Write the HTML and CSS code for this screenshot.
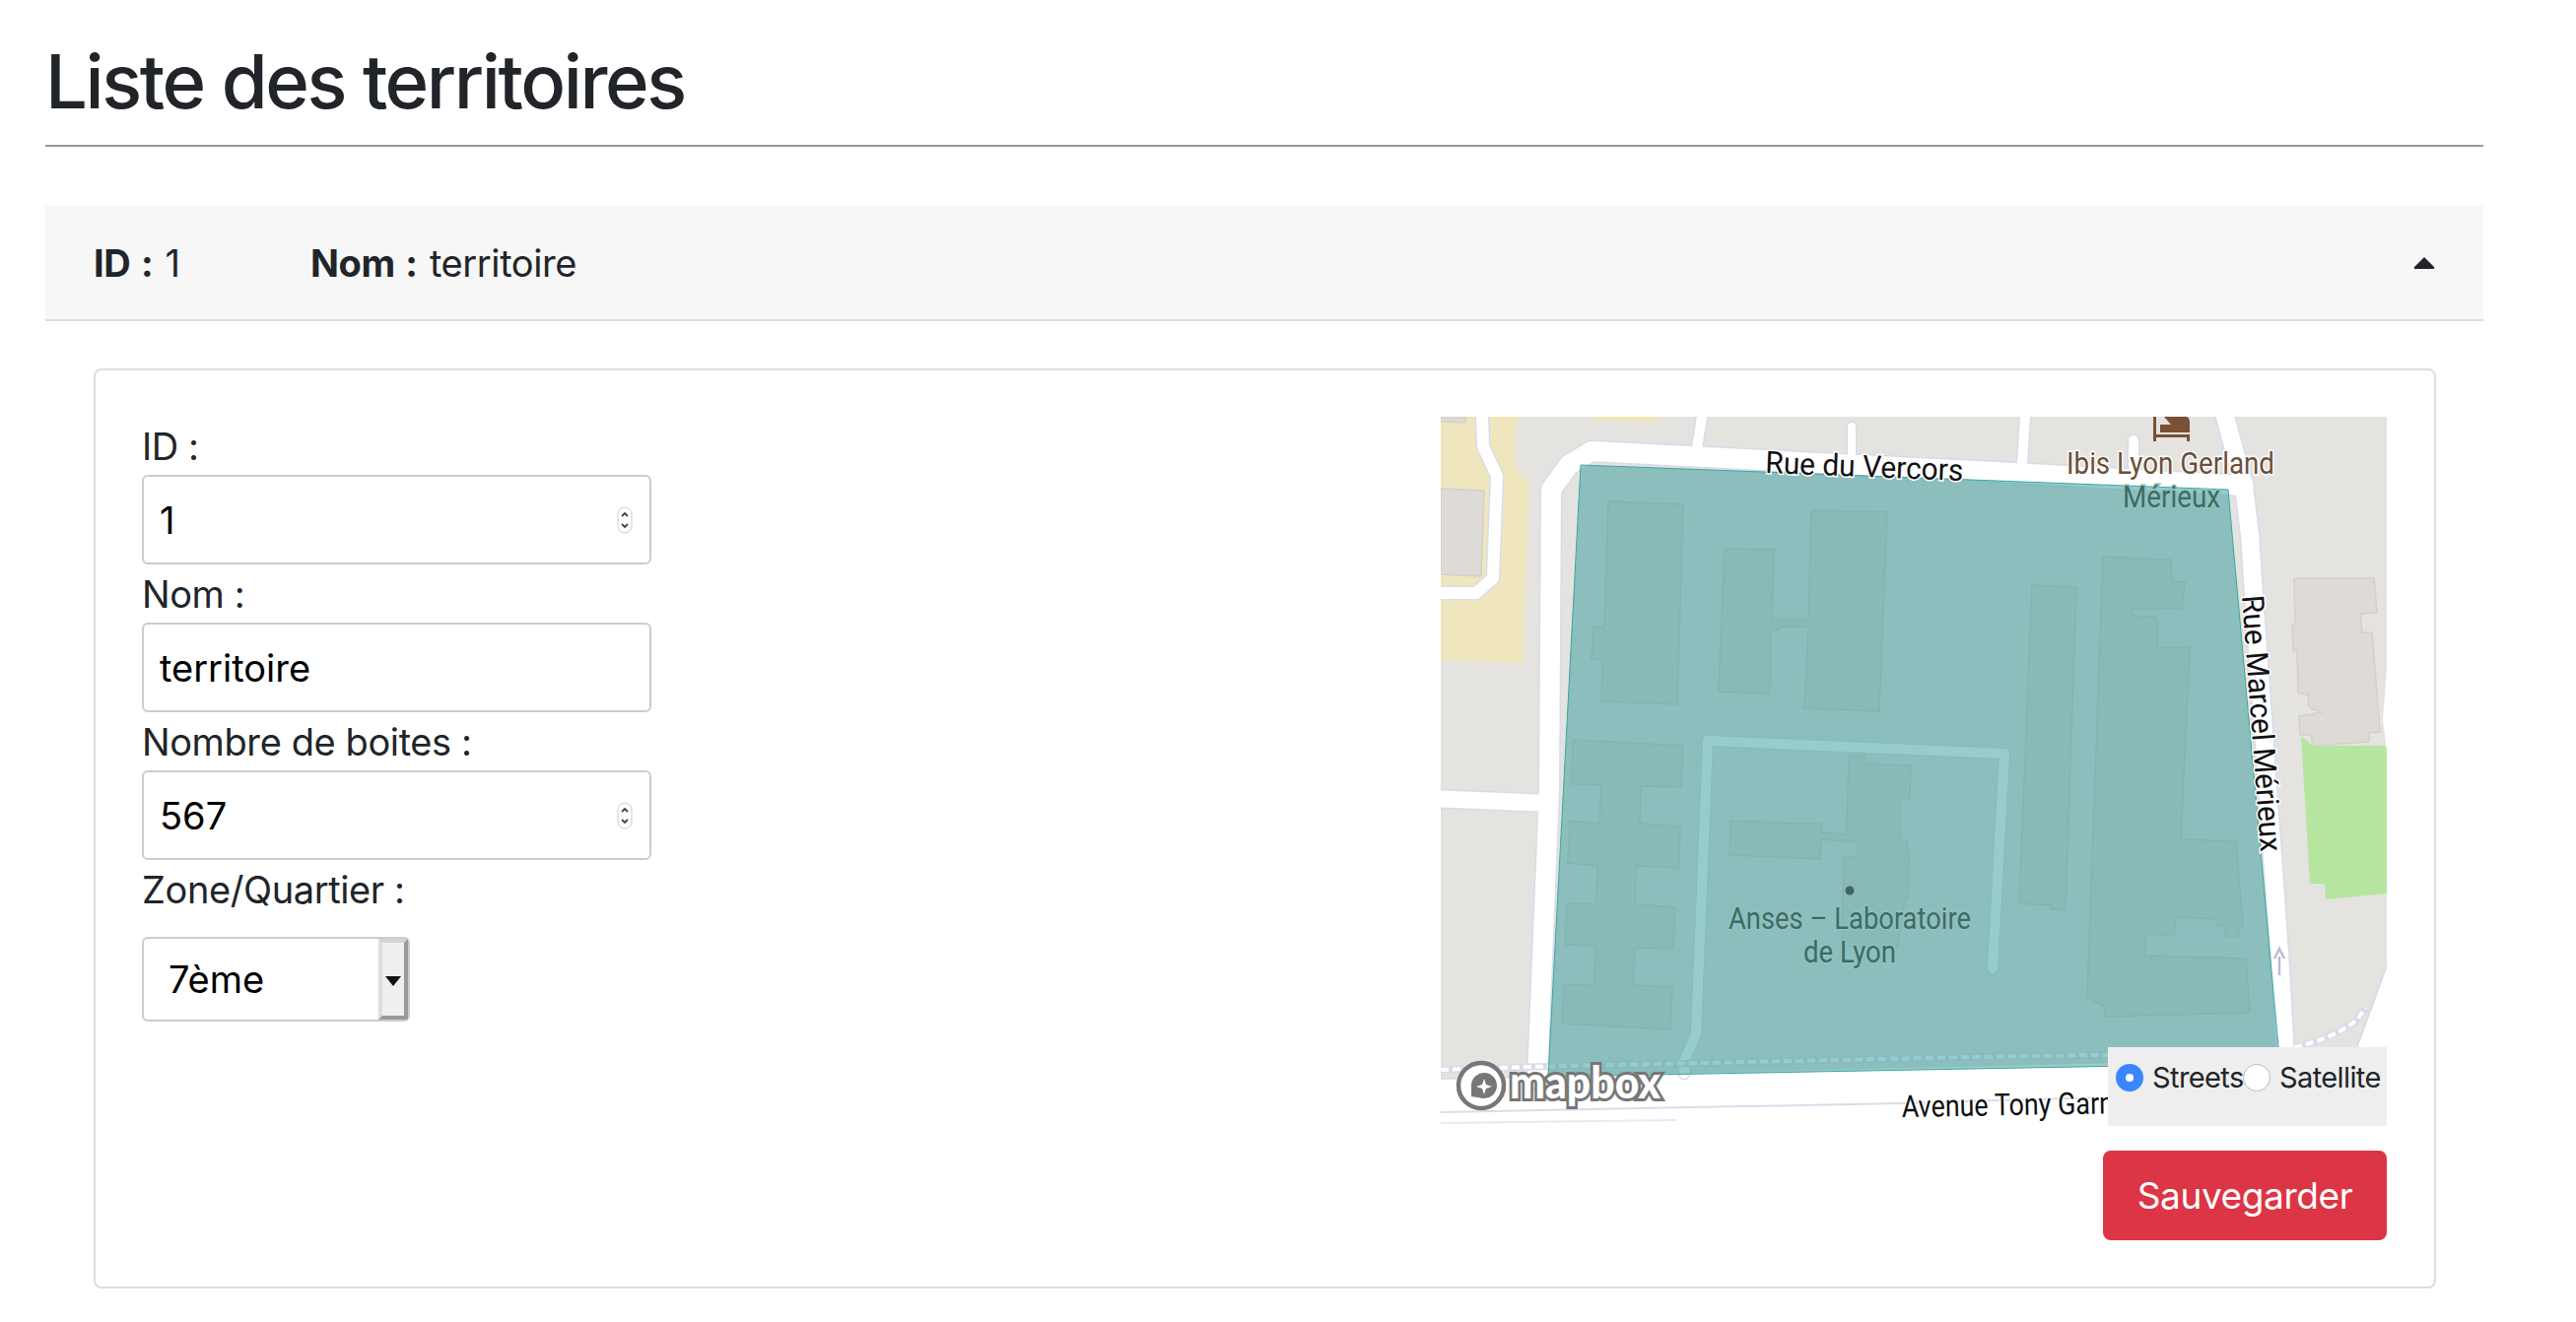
FILE: index.html
```html
<!DOCTYPE html>
<html lang="fr">
<head>
    <meta charset="UTF-8">
    <title>Liste des territoires</title>
    <link rel="stylesheet" href="styles.css">
</head>
<body>

<div class="page">
    <h1>Liste des territoires</h1>
    <hr class="title-rule">

    <div class="territory-head">
        <span class="head-id"><b>ID :</b> 1</span>
        <span class="head-name"><b>Nom :</b> territoire</span>
        <svg class="caret" viewBox="0 0 22 13"><path d="M11 1 L21 11 Q22 13 20 13 L2 13 Q0 13 1 11 Z"/></svg>
    </div>

    <div class="card">
        <form class="fields">
            <label for="id">ID :</label>
            <div class="field">
                <input type="number" id="id" value="1">
                <svg class="spin" viewBox="0 0 16 28"><rect x="1" y="1" width="14" height="26" rx="7"/><path d="M5 10 L8 7 L11 10 M5 18 L8 21 L11 18"/></svg>
            </div>

            <label for="nom">Nom :</label>
            <div class="field">
                <input type="text" id="nom" value="territoire">
            </div>

            <label for="boites">Nombre de boites :</label>
            <div class="field">
                <input type="number" id="boites" value="567">
                <svg class="spin" viewBox="0 0 16 28"><rect x="1" y="1" width="14" height="26" rx="7"/><path d="M5 10 L8 7 L11 10 M5 18 L8 21 L11 18"/></svg>
            </div>

            <label for="zone">Zone/Quartier :</label>
            <div class="select-box">
                <select id="zone">
                    <option>7ème</option>
                </select>
                <span class="select-arrow"></span>
            </div>
        </form>

        <div class="side">
            <div class="map">
                <svg class="map-svg" viewBox="0 0 960 720" width="960" height="720">
                    <rect class="land" width="960" height="720"/>
                    <!-- yellow parcels -->
                    <path class="parcel" d="M0 0 L82 0 L76 7 L75 50 L90 69 L83 250 L0 247 Z"/>
                    <path class="parcel" d="M155 0 L221 0 L221 6 L157 4 Z"/>
                    <path class="grass" d="M873 324 L885 334 L960 334 L960 484 L898 490 L897 474 L882 474 Z"/>

                    <!-- bottom and corner white areas -->
                    <path class="white-area" d="M0 672 L960 650 L960 720 L0 720 Z"/>
                    <path class="white-area" d="M960 557 L930 639 L960 650 Z"/>
                    <path class="white-area" d="M960 257 L956 307 L960 340 Z"/>
                    <path class="thin-case" d="M0 672 L110 670 M960 557 L930 639 M0 706 L466 697 L700 690"/>
                    <path class="thin-case faint" d="M0 717 L240 714"/>

                    <!-- roads, casing then fill -->
                    <g class="road-case">
                        <path class="w20" d="M98 672 L110 380 L112 74 L130 49 L153 35 L580 57 L815 70"/>
                        <path class="w18" d="M796 0 L815 70 L821 120 L825 180 L851 544 L857 650"/>
                        <path class="w12" d="M42 0 L43 30 L57 60 L53 164 L36 179 L0 179"/>
                        <path class="w17" d="M0 388 L100 392"/>
                        <path class="w10" d="M265 0 L260 32"/>
                        <path class="w8" d="M417 10 L417 40"/>
                        <path class="w10" d="M593 0 L590 47"/>
                        <path class="w10" d="M703 24 L703 50"/>
                        <path class="w10" d="M271 329 L572 342 L560 560"/>
                        <path class="w10" d="M271 329 L259 627 L247 654 L247 667"/>
                    </g>
                    <g class="road-fill">
                        <path class="w20" d="M98 672 L110 380 L112 74 L130 49 L153 35 L580 57 L815 70"/>
                        <path class="w18" d="M796 0 L815 70 L821 120 L825 180 L851 544 L857 650"/>
                        <path class="w12" d="M42 0 L43 30 L57 60 L53 164 L36 179 L0 179"/>
                        <path class="w17" d="M0 388 L100 392"/>
                        <path class="w10" d="M265 0 L260 32"/>
                        <path class="w8" d="M417 10 L417 40"/>
                        <path class="w10" d="M593 0 L590 47"/>
                        <path class="w10" d="M703 24 L703 50"/>
                        <path class="w10" d="M271 329 L572 342 L560 560"/>
                        <path class="w10" d="M271 329 L259 627 L247 654 L247 667"/>
                    </g>
                    <path class="walk-case" d="M0 663 L88 660 L538 650 L860 645"/>
                    <path class="walk-dash" d="M0 663 L88 660 L538 650 L860 645"/>
                    <path class="walk-case" d="M866 640 Q905 632 930 612 L938 600"/>
                    <path class="walk-dash" d="M866 640 Q905 632 930 612 L938 600"/>

                    <!-- buildings -->
                    <g class="building">
                        <path d="M0 1 L26 1 L24 6 L0 5 Z"/>
                        <path d="M0 73 L44 75 L41 162 L0 160 Z"/>
                        <path d="M866 164 L947 164 L950 199 L933 200 L935 219 L945 219 L953 320 L942 321 L942 330 L885 334 L883 323 L872 323 L871 304 L895 300 L885 297 L881 294 L880 282 L870 280 L869 237 L865 237 L864 211 L867 210 Z"/>
                        <path d="M170 86 L246 89 L240 292 L163 289 L164 247 L153 246 L155 213 L166 214 Z"/>
                        <path d="M288 134 L338 135 L336 206 L373 206 L376 95 L453 97 L445 299 L369 296 L373 213 L344 213 L343 216 L335 216 L334 281 L282 279 Z"/>
                        <path d="M134 328 L246 334 L244 376 L203 375 L202 413 L243 416 L242 458 L198 456 L197 495 L238 498 L236 540 L197 539 L195 577 L235 579 L233 622 L123 616 L125 576 L156 577 L157 537 L126 536 L128 494 L158 495 L159 456 L129 453 L131 411 L161 412 L163 374 L133 373 Z"/>
                        <path d="M414 344 L430 345 L430 352 L477 354 L476 387 L466 388 L466 430 L473 431 L475 449 L474 489 L471 489 L463 540 L407 537 L409 447 L423 447 L423 432 L386 429 L385 449 L293 445 L294 410 L365 413 L386 413 L386 422 L412 424 Z"/>
                        <path d="M600 171 L645 173 L634 500 L619 500 L619 496 L587 494 Z"/>
                        <path d="M672 142 L705 144 L741 145 L742 167 L755 168 L752 195 L702 195 L701 202 L725 203 L728 207 L727 234 L760 234 L751 429 L807 431 L814 517 L810 517 L810 527 L796 527 L796 517 L787 516 L787 510 L746 508 L744 527 L716 525 L714 547 L817 550 L821 605 L674 609 L673 598 L656 589 Z"/>
                    </g>

                    <path class="zone-poly" d="M142 49 L799 74 L850 640 L862 656 L538 662 L109 670 Z"/>

                    <path class="one-way" d="M851 567 L851 548 M846 550 L851 540 L856 550"/>

                    <!-- hotel icon -->
                    <path class="hotel" d="M723 0 L726 0 L726 18 L760 18 L760 25 L757 25 L757 21 L726 21 L726 25 L723 25 Z M734 0 L757 0 Q760 1 760 6 L760 16 L730 16 L730 8 L741 8 Z"/>

                    <text class="label road-name" textLength="201" lengthAdjust="spacingAndGlyphs" transform="translate(329 57) rotate(2.3)">Rue du Vercors</text>
                    <text class="label poi-brown" x="635" y="58" textLength="211" lengthAdjust="spacingAndGlyphs">Ibis Lyon Gerland</text>
                    <text class="label poi-green" x="692" y="92" textLength="99" lengthAdjust="spacingAndGlyphs">Mérieux</text>
                    <text class="label road-name" textLength="261" lengthAdjust="spacingAndGlyphs" transform="translate(813 182) rotate(85.8)">Rue Marcel Mérieux</text>
                    <circle class="poi-dot" cx="415" cy="481" r="4.5"/>
                    <text class="label poi-green" x="292" y="520" textLength="246" lengthAdjust="spacingAndGlyphs">Anses – Laboratoire</text>
                    <text class="label poi-green" x="368" y="554" textLength="94" lengthAdjust="spacingAndGlyphs">de Lyon</text>
                    <text class="label road-name" textLength="245" lengthAdjust="spacingAndGlyphs" transform="translate(468 711) rotate(-1)">Avenue Tony Garnier</text>

                    <!-- mapbox logo -->
                    <circle class="logo-ring" cx="41" cy="679" r="23"/>
                    <path class="logo-pin" d="M31 690 L31 678 A13 13 0 1 1 43 692 Z"/>
                    <path class="logo-star" d="M44 672 L46 678 L52 680 L46 682 L44 688 L42 682 L36 680 L42 678 Z"/>
                    <text class="logo-word" x="70" y="692" textLength="153" lengthAdjust="spacingAndGlyphs">mapbox</text>
                </svg>

                <div class="style-switch">
                    <span class="radio radio-on"></span>
                    <span class="radio-label">Streets</span>
                    <span class="radio"></span>
                    <span class="radio-label">Satellite</span>
                </div>
            </div>
            <button type="button" class="save">Sauvegarder</button>
        </div>
    </div>
</div>

</body>
</html>
```

FILE: styles.css
```css
body {
    margin: 0;
    background-color: #fff;
    color: #212529;
    font-family: Inter, "Liberation Sans", sans-serif;
}
.page {
    padding: 34px 94px 34px 46px;
}
h1 {
    margin: 0;
    font-size: 76px;
    line-height: 96px;
    font-weight: 500;
    letter-spacing: -2.4px;
}
.title-rule {
    margin: 17px 0 60px;
    border: none;
    border-top: 2px solid #999;
}
.territory-head {
    display: flex;
    align-items: center;
    height: 115px;
    padding: 0 49px 0 49px;
    background-color: #f7f7f7;
    border-bottom: 2px solid #ddd;
    font-size: 38px;
    letter-spacing: -0.4px;
    word-spacing: 2px;
}
.territory-head b {
    font-weight: 700;
}
.head-id {
    width: 220px;
}
.head-name {
    flex: 1;
}
.caret {
    width: 22px;
    height: 13px;
    fill: #212529;
}
.card {
    display: flex;
    justify-content: space-between;
    margin: 48px 48px 0 49px;
    padding: 47px 48px 47px 47px;
    background-color: #fff;
    border: 2px solid #ddd;
    border-radius: 8px;
}
.fields {
    width: 517px;
}
.fields label {
    display: block;
    height: 59px;
    line-height: 61px;
    font-size: 38px;
    letter-spacing: -0.4px;
}
.field {
    position: relative;
}
.field input {
    display: block;
    box-sizing: border-box;
    width: 100%;
    height: 91px;
    padding: 0 16px;
    border: 2px solid #ccc;
    border-radius: 6px;
    font-family: inherit;
    font-size: 38px;
    color: #000;
    -moz-appearance: textfield;
}
.field input::-webkit-inner-spin-button,
.field input::-webkit-outer-spin-button {
    -webkit-appearance: none;
    margin: 0;
}
.spin {
    position: absolute;
    top: 32px;
    right: 19px;
    width: 16px;
    height: 28px;
}
.spin rect {
    fill: #fff;
    stroke: #ccc;
    stroke-width: 1;
}
.spin path {
    fill: none;
    stroke: #444;
    stroke-width: 1.8;
}
.select-box {
    position: relative;
    box-sizing: border-box;
    width: 272px;
    height: 86px;
    margin-top: 19px;
    border: 2px solid #ccc;
    border-radius: 6px;
}
.select-box select {
    width: 100%;
    height: 100%;
    padding: 0 0 0 25px;
    border: none;
    background: none;
    appearance: none;
    font-family: inherit;
    font-size: 38px;
    color: #000;
}
.select-arrow {
    position: absolute;
    top: 0;
    right: 0;
    bottom: 0;
    box-sizing: border-box;
    width: 30px;
    background-color: #efefef;
    border-style: solid;
    border-width: 4px 4px 4px 4px;
    border-color: #d4d4d4 #999 #999 #ddd;
}
.select-arrow::after {
    content: "";
    position: absolute;
    top: 34px;
    left: 3px;
    border-style: solid;
    border-width: 10px 8px 0 8px;
    border-color: #111 transparent transparent transparent;
}
.side {
    display: flex;
    flex-direction: column;
    align-items: flex-end;
}
.map {
    position: relative;
    width: 960px;
    height: 720px;
}
.map-svg {
    display: block;
}
.land { fill: #e5e3df; }
.parcel { fill: #f0e6bd; }
.grass { fill: #b5e59f; }
.white-area { fill: #fff; }
.thin-case {
    fill: none;
    stroke: #d8dcea;
    stroke-width: 2;
}
.thin-case.faint {
    stroke: #e8eaf2;
}
.road-case path, .road-fill path {
    fill: none;
    stroke-linejoin: round;
    stroke-linecap: round;
}
.road-case path { stroke: #d8dcea; }
.road-fill path { stroke: #fff; }
.road-case .w20 { stroke-width: 23; }
.road-fill .w20 { stroke-width: 20; }
.road-case .w18 { stroke-width: 21; }
.road-fill .w18 { stroke-width: 18; }
.road-case .w17 { stroke-width: 20; }
.road-fill .w17 { stroke-width: 17; }
.road-case .w12 { stroke-width: 15; }
.road-fill .w12 { stroke-width: 12; }
.road-case .w10 { stroke-width: 13; }
.road-fill .w10 { stroke-width: 10; }
.road-case .w8 { stroke-width: 11; }
.road-fill .w8 { stroke-width: 8; }
.walk-case {
    fill: none;
    stroke: #d8dcea;
    stroke-width: 7;
}
.walk-dash {
    fill: none;
    stroke: #fff;
    stroke-width: 4;
    stroke-dasharray: 8 4;
}
.building path {
    fill: #dedbd6;
    stroke: #d3d0cb;
    stroke-width: 1.5;
}
.zone-poly {
    fill: #319999;
    fill-opacity: 0.5;
    stroke: #3aa6a0;
    stroke-width: 1;
}
.one-way {
    fill: none;
    stroke: #b9bdd0;
    stroke-width: 2.5;
}
.hotel { fill: #7a5036; }
.label {
    font-family: Roboto, "Liberation Sans", sans-serif;
    font-size: 31px;
    paint-order: stroke;
    stroke-width: 3px;
}
.road-name {
    fill: #111;
    stroke: #fff;
}
.poi-brown {
    fill: #6a4f3a;
    stroke: #fff;
}
.poi-green {
    fill: #3e6b64;
    stroke: #8fc2c0;
}
.poi-dot { fill: #41675c; }
.logo-ring {
    fill: #fff;
    stroke: #777;
    stroke-width: 4.5;
}
.logo-pin { fill: #777; }
.logo-star { fill: #fff; }
.logo-word {
    font-family: Lato, "Liberation Sans", sans-serif;
    font-size: 46px;
    font-weight: 900;
    fill: #fff;
    stroke: #777;
    stroke-width: 6px;
    paint-order: stroke;
}
.style-switch {
    position: absolute;
    right: 0;
    bottom: 0;
    display: flex;
    box-sizing: border-box;
    width: 283px;
    height: 80px;
    padding: 16px 8px 0 8px;
    background-color: #eee;
    font-size: 29px;
    letter-spacing: -0.6px;
}
.radio {
    box-sizing: border-box;
    flex: none;
    width: 28px;
    height: 28px;
    margin-top: 1px;
    background-color: #fff;
    border: 1px solid #bbb;
    border-radius: 50%;
}
.radio-on {
    background-color: #fff;
    border: 10px solid #3a86ff;
}
.radio-label {
    margin-left: 9px;
    line-height: 30px;
}
.radio-label:nth-child(2) {
    width: 92px;
}
.save {
    width: 288px;
    height: 91px;
    margin-top: 25px;
    background-color: #dc3545;
    color: #fff;
    border: none;
    border-radius: 8px;
    font-family: inherit;
    font-size: 37px;
    letter-spacing: -0.4px;
}
```
